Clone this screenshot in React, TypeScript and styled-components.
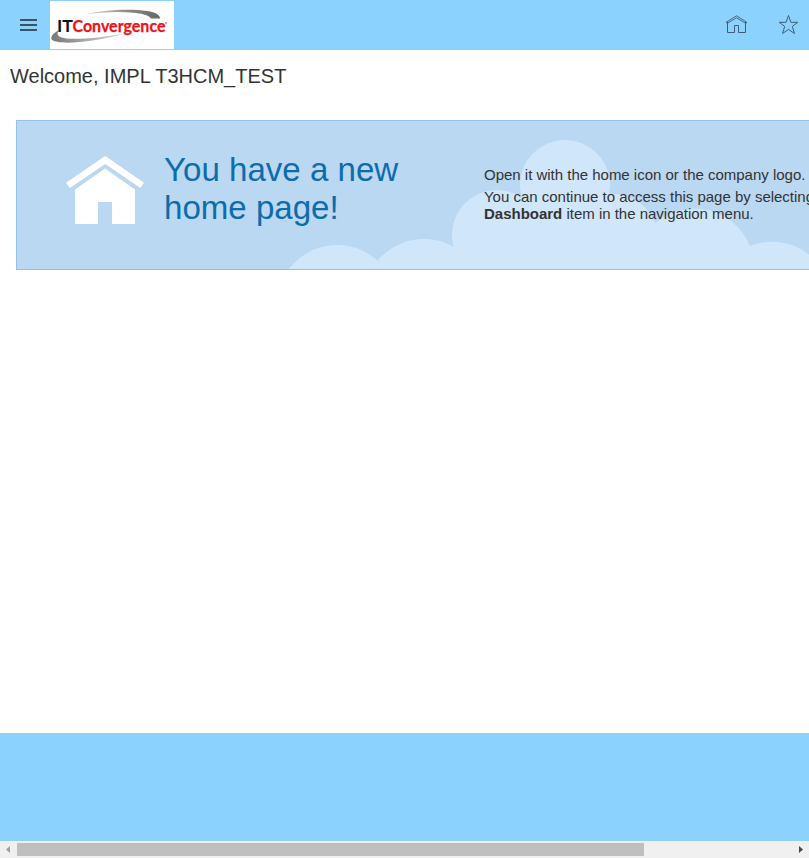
import React from "react";
import styled, { createGlobalStyle } from "styled-components";

const GlobalStyle = createGlobalStyle`
  * { box-sizing: border-box; }
  html, body { margin: 0; padding: 0; overflow: hidden; background: #fff; }
  body { font-family: "Liberation Sans", Arial, sans-serif; color: #333; }
  p, h1, h2 { margin: 0; font-weight: 400; }
  button { border: 0; padding: 0; background: none; display: block; }
  svg { display: block; }
`;

const Page = styled.div`
  width: 100%;
  height: 858px;
  display: flex;
  flex-direction: column;
  overflow: hidden;
`;

const Header = styled.header`
  height: 50px;
  flex: none;
  display: flex;
  background: #8cd2ff;
`;

const MenuButton = styled.button`
  width: 50px;
  height: 50px;
`;

const Logo = styled.div`
  width: 124px;
  height: 48px;
  margin-top: 1px;
  background: #fff;
`;

const HeaderActions = styled.nav`
  margin-left: auto;
  display: flex;
`;

const ActionButton = styled.button<{ $width: number }>`
  width: ${(p) => p.$width}px;
  height: 50px;
`;

const Main = styled.main`
  height: 683px;
  flex: none;
  overflow: hidden;
`;

const Welcome = styled.h1`
  height: 70px;
  padding: 14px 0 0 10px;
  font-size: 20px;
  line-height: 24px;
  white-space: nowrap;
`;

const Banner = styled.section`
  position: relative;
  width: 1000px;
  height: 150px;
  margin-left: 16px;
  border: 1px solid #94c1e4;
  background: #bad8f2;
  display: flex;
  overflow: hidden;
`;

const Clouds = styled.svg`
  position: absolute;
  inset: 0;
`;

const BannerIcon = styled.div`
  position: relative;
  width: 147px;
  flex: none;
  padding: 34px 0 0 48px;
`;

const BannerTitle = styled.h2`
  position: relative;
  width: 320px;
  flex: none;
  padding-top: 30px;
  color: #0d6cac;
  font-size: 33.1px;
  line-height: 38px;
`;

const BannerText = styled.div`
  position: relative;
  padding-top: 45px;
  font-size: 15px;
  line-height: 17px;
  letter-spacing: -0.01px;
  white-space: nowrap;
`;

const Line = styled.p<{ $gap?: number }>`
  margin-bottom: ${(p) => p.$gap ?? 0}px;
`;

const Footer = styled.footer`
  height: 108px;
  flex: none;
  background: #8cd2ff;
`;

const ScrollBar = styled.div`
  height: 17px;
  flex: none;
  display: flex;
  align-items: center;
  background: #f0f0f0;
`;

const ScrollArrow = styled.div`
  width: 17px;
  height: 17px;
`;

const ScrollTrack = styled.div`
  flex: 1;
`;

const ScrollThumb = styled.div`
  width: 627px;
  height: 13px;
  background: #bfbfbf;
`;

const clouds = [
  [337, 305, 60],
  [424, 300, 61],
  [497, 235, 45],
  [565, 185, 45],
  [613, 239, 45],
  [694.5, 268.7, 60],
  [772, 301.7, 60],
];

export default function App() {
  return (
    <>
      <GlobalStyle />
      <Page>
        <Header>
          <MenuButton aria-label="Navigator">
            <svg width="50" height="50" fill="#3c5361">
              <path d="M20 19h17v2H20zM20 24h17v2H20zM20 29h17v2H20z" />
            </svg>
          </MenuButton>
          <Logo>
            <svg width="124" height="48">
              <defs>
                <linearGradient id="top" x1="0" x2="1">
                  <stop offset="0" stopColor="#ddd" />
                  <stop offset=".6" stopColor="#888" />
                  <stop offset="1" stopColor="#666" />
                </linearGradient>
                <linearGradient id="bottom" x1="0" x2="1">
                  <stop offset="0" stopColor="#777" />
                  <stop offset=".3" stopColor="#999" />
                  <stop offset="1" stopColor="#ddd" />
                </linearGradient>
              </defs>
              <path d="M34 13.5C52 9 80 7.5 97 10C106 11.5 110 14 110 17.5H101C99 14.5 94 13 86 12C68 10 52 11 34 13.5Z" fill="url(#top)" />
              <path d="M9 29C3 32 0 36 2 39C10 44 40 42 78 32C50 37 20 40 10 36C7 34 7 32 9 29Z" fill="url(#bottom)" />
              <g fontFamily="Lato, sans-serif" fontSize="17">
                <text x="7" y="31" fill="#111" fontWeight="700" textLength="16" lengthAdjust="spacingAndGlyphs">IT</text>
                <text x="22.5" y="31" fill="#f01018" stroke="#f01018" strokeWidth=".25" fontWeight="700" textLength="93" lengthAdjust="spacingAndGlyphs">Convergence</text>
              </g>
              <circle cx="116" cy="22" r=".8" fill="#f01018" />
            </svg>
          </Logo>
          <HeaderActions>
            <ActionButton $width={52} aria-label="Home">
              <svg width="52" height="50" fill="none" stroke="#3f5e72" strokeWidth="1">
                <path d="M10.5 21.5V32.5H17.5V25.5H21.5V32.5H28.5V21.5" />
                <path d="M10 23.5L19.5 17.8L29 23.5M10 23.5L9.3 22.2L19.5 15.8L29.7 22.2L29 23.5" strokeWidth=".9" />
              </svg>
            </ActionButton>
            <ActionButton $width={40} aria-label="Favorites">
              <svg width="40" height="50" fill="none" stroke="#3f5e72" strokeWidth="1">
                <path d="M19.5 15.5L21.9 22.3H28.8L23.3 26.4L25.5 33.5L19.5 29.4L13.5 33.5L15.7 26.4L10.2 22.3H17.1Z" />
              </svg>
            </ActionButton>
          </HeaderActions>
        </Header>
        <Main>
          <Welcome>Welcome, IMPL T3HCM_TEST</Welcome>
          <Banner>
            <Clouds width="998" height="148" viewBox="17 121 998 148" fill="#d0e6fb">
              {clouds.map(([cx, cy, r]) => (
                <circle key={cx} cx={cx} cy={cy} r={r} />
              ))}
              <path d="M497 235H700V269H424V262L455 246Z" />
              <path d="M550 205H600V245H530Z" />
            </Clouds>
            <BannerIcon>
              <svg width="80" height="70" viewBox="65 155 80 70" fill="#fff">
                <path d="M105.3 156L144 182.7L140.3 188L105.3 164L69.8 188L66 182.7Z" />
                <path d="M105 168.5L135 189.5V224H112V202H98V224H75V189.5Z" />
              </svg>
            </BannerIcon>
            <BannerTitle>
              You have a new
              <br />
              home page!
            </BannerTitle>
            <BannerText>
              <Line $gap={5}>Open it with the home icon or the company logo.</Line>
              <Line>You can continue to access this page by selecting the</Line>
              <Line>
                <b>Dashboard</b> item in the navigation menu.
              </Line>
            </BannerText>
          </Banner>
        </Main>
        <Footer />
        <ScrollBar>
          <ScrollArrow>
            <svg width="17" height="17" fill="#a0a0a0">
              <path d="M10 5V12L6 8.5Z" />
            </svg>
          </ScrollArrow>
          <ScrollTrack>
            <ScrollThumb />
          </ScrollTrack>
          <ScrollArrow>
            <svg width="17" height="17" fill="#484848">
              <path d="M7 5V12L11 8.5Z" />
            </svg>
          </ScrollArrow>
        </ScrollBar>
      </Page>
    </>
  );
}
